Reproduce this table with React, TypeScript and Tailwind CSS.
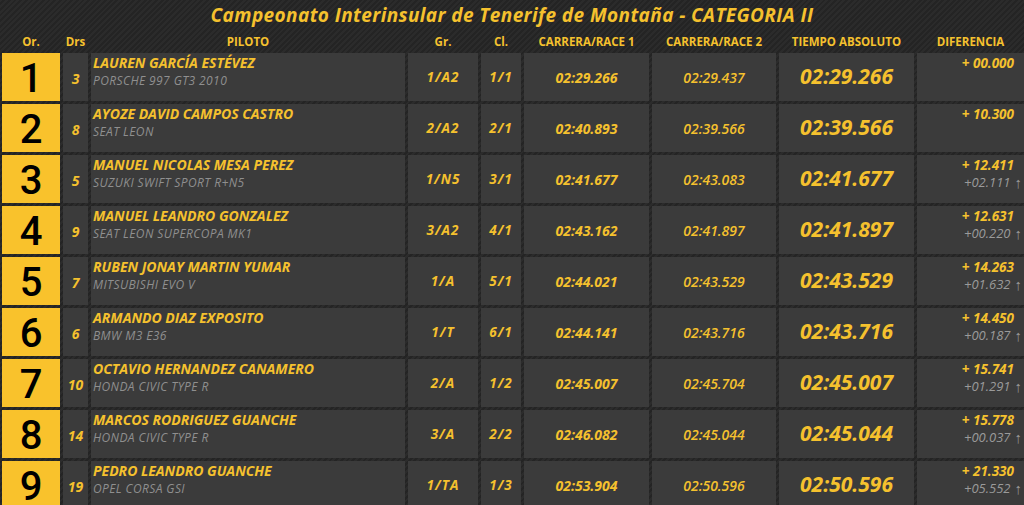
import React from 'react'

type Row = {
  pos: number
  drs: number
  name: string
  car: string
  gr: string
  cl: string
  r1: string
  r2: string
  best: string
  diff: string
  gap?: string
}

const rows: Row[] = [
  { pos: 1, drs: 3, name: 'LAUREN GARCÍA ESTÉVEZ', car: 'PORSCHE 997 GT3 2010', gr: '1/A2', cl: '1/1', r1: '02:29.266', r2: '02:29.437', best: '02:29.266', diff: '+ 00.000' },
  { pos: 2, drs: 8, name: 'AYOZE DAVID CAMPOS CASTRO', car: 'SEAT LEON', gr: '2/A2', cl: '2/1', r1: '02:40.893', r2: '02:39.566', best: '02:39.566', diff: '+ 10.300' },
  { pos: 3, drs: 5, name: 'MANUEL NICOLAS MESA PEREZ', car: 'SUZUKI SWIFT SPORT R+N5', gr: '1/N5', cl: '3/1', r1: '02:41.677', r2: '02:43.083', best: '02:41.677', diff: '+ 12.411', gap: '+02.111' },
  { pos: 4, drs: 9, name: 'MANUEL LEANDRO GONZALEZ', car: 'SEAT LEON SUPERCOPA MK1', gr: '3/A2', cl: '4/1', r1: '02:43.162', r2: '02:41.897', best: '02:41.897', diff: '+ 12.631', gap: '+00.220' },
  { pos: 5, drs: 7, name: 'RUBEN JONAY MARTIN YUMAR', car: 'MITSUBISHI EVO V', gr: '1/A', cl: '5/1', r1: '02:44.021', r2: '02:43.529', best: '02:43.529', diff: '+ 14.263', gap: '+01.632' },
  { pos: 6, drs: 6, name: 'ARMANDO DIAZ EXPOSITO', car: 'BMW M3 E36', gr: '1/T', cl: '6/1', r1: '02:44.141', r2: '02:43.716', best: '02:43.716', diff: '+ 14.450', gap: '+00.187' },
  { pos: 7, drs: 10, name: 'OCTAVIO HERNANDEZ CANAMERO', car: 'HONDA CIVIC TYPE R', gr: '2/A', cl: '1/2', r1: '02:45.007', r2: '02:45.704', best: '02:45.007', diff: '+ 15.741', gap: '+01.291' },
  { pos: 8, drs: 14, name: 'MARCOS RODRIGUEZ GUANCHE', car: 'HONDA CIVIC TYPE R', gr: '3/A', cl: '2/2', r1: '02:46.082', r2: '02:45.044', best: '02:45.044', diff: '+ 15.778', gap: '+00.037' },
  { pos: 9, drs: 19, name: 'PEDRO LEANDRO GUANCHE', car: 'OPEL CORSA GSI', gr: '1/TA', cl: '1/3', r1: '02:53.904', r2: '02:50.596', best: '02:50.596', diff: '+ 21.330', gap: '+05.552' },
]

const cols = 'grid grid-cols-[58px_25px_314px_70px_40px_125px_124px_135px_1fr] gap-x-[3px]'
const cell = 'bg-[#3b3b3b] h-[48px] flex items-center justify-center'

export default function App() {
  return (
    <div className="w-[1024px] h-[505px] overflow-hidden bg-[#282828] bg-[repeating-linear-gradient(135deg,#2b2b2b_0px,#2b2b2b_2px,#242424_2px,#242424_4px)] font-['Open_Sans',sans-serif] text-[#f5c12e]">
      <div className="h-[30px] flex items-center justify-center">
        <h1 className="text-[19px] font-bold italic leading-none tracking-[0.4px]">
          Campeonato Interinsular de Tenerife de Montaña - CATEGORIA II
        </h1>
      </div>
      <div className={`${cols} pl-[2px] h-[23px] items-center text-[11.5px] font-bold text-center`}>
        <div>Or.</div>
        <div>Drs</div>
        <div>PILOTO</div>
        <div>Gr.</div>
        <div>Cl.</div>
        <div>CARRERA/RACE 1</div>
        <div>CARRERA/RACE 2</div>
        <div>TIEMPO ABSOLUTO</div>
        <div>DIFERENCIA</div>
      </div>
      <div className="flex flex-col gap-[3px]">
        {rows.map((r) => (
          <div key={r.pos} className={`${cols} pl-[2px]`}>
            <div className="bg-[#f9c22c] h-[48px] flex items-center justify-center pt-[4px] font-['Roboto',sans-serif] font-medium text-[40px] leading-none text-black">
              {r.pos}
            </div>
            <div className={`${cell} pt-[2px] text-[14px] font-bold italic`}>{r.drs}</div>
            <div className="bg-[#3b3b3b] h-[48px] pl-[2px] pt-[1px] italic">
              <div className="text-[14px] font-bold leading-[18px]">{r.name}</div>
              <div className="text-[12px] leading-[18px] tracking-[0.4px] text-[#8f8f8f]">{r.car}</div>
            </div>
            <div className={`${cell} text-[13.5px] font-bold italic tracking-[1px]`}>{r.gr}</div>
            <div className={`${cell} text-[13.5px] font-bold italic tracking-[1px]`}>{r.cl}</div>
            <div className={`${cell} text-[14px] font-bold italic`}>{r.r1}</div>
            <div className={`${cell} text-[14px] font-semibold italic`}>{r.r2}</div>
            <div className={`${cell} text-[21px] font-bold italic`}>{r.best}</div>
            <div className="bg-[#3b3b3b] h-[48px] pt-[1px] pr-[2px] flex flex-col items-end italic">
              <div className="text-[13.5px] font-bold leading-[18px] pr-[8px]">{r.diff}</div>
              {r.gap && (
                <div className="text-[13px] leading-[17px] text-[#9a9a9a] flex items-center gap-[4px]">
                  {r.gap}
                  <span className="not-italic text-[15px] leading-none">↑</span>
                </div>
              )}
            </div>
          </div>
        ))}
      </div>
    </div>
  )
}
